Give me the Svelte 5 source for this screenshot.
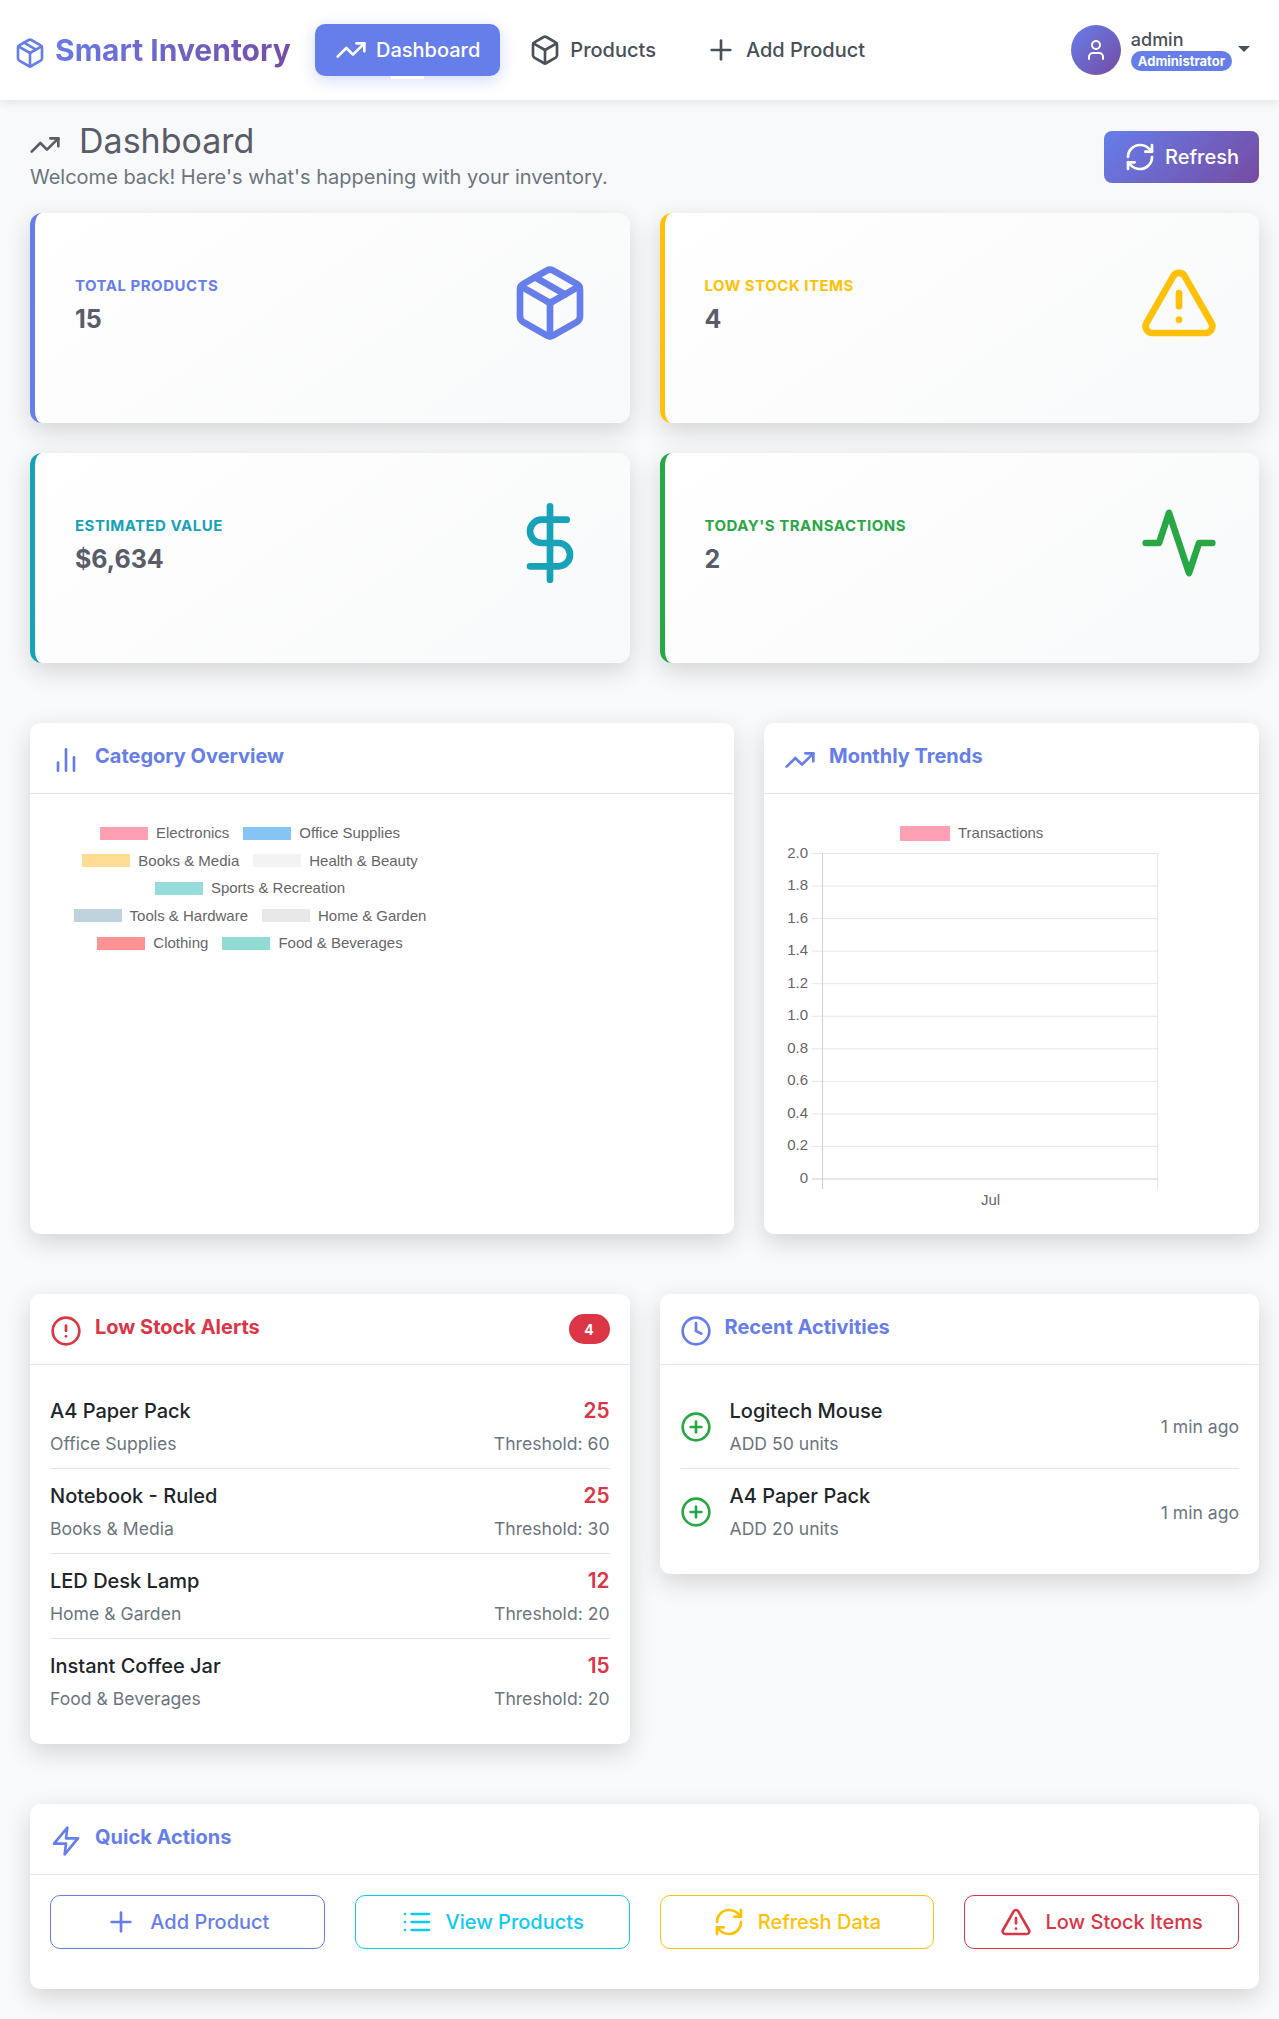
<script>
	const icons = {
		package: ['M11 21.73a2 2 0 0 0 2 0l7-4A2 2 0 0 0 21 16V8a2 2 0 0 0-1-1.73l-7-4a2 2 0 0 0-2 0l-7 4A2 2 0 0 0 3 8v8a2 2 0 0 0 1 1.73z', 'M12 22V12', 'm3.3 7 8.7 5 8.7-5', 'm7.5 4.27 9 5.15'],
		box: ['M21 8a2 2 0 0 0-1-1.73l-7-4a2 2 0 0 0-2 0l-7 4A2 2 0 0 0 3 8v8a2 2 0 0 0 1 1.73l7 4a2 2 0 0 0 2 0l7-4A2 2 0 0 0 21 16Z', 'm3.3 7 8.7 5 8.7-5', 'M12 22V12'],
		trending: ['M22 7l-8.5 8.5-5-5L2 17', 'M16 7h6v6'],
		plus: ['M5 12h14', 'M12 5v14'],
		user: ['M19 21v-2a4 4 0 0 0-4-4H9a4 4 0 0 0-4 4v2', 'M16 7a4 4 0 1 1-8 0 4 4 0 0 1 8 0z'],
		refresh: ['M3 12a9 9 0 0 1 9-9 9.75 9.75 0 0 1 6.74 2.74L21 8', 'M21 3v5h-5', 'M21 12a9 9 0 0 1-9 9 9.75 9.75 0 0 1-6.74-2.74L3 16', 'M8 16H3v5'],
		warning: ['m21.73 18-8-14a2 2 0 0 0-3.48 0l-8 14A2 2 0 0 0 4 21h16a2 2 0 0 0 1.73-3', 'M12 9v4', 'M12 17h.01'],
		dollar: ['M12 1v22', 'M17 5H9.5a3.5 3.5 0 0 0 0 7h5a3.5 3.5 0 0 1 0 7H6'],
		activity: ['M22 12h-4l-3 9L9 3l-3 9H2'],
		bars: ['M18 20V10', 'M12 20V4', 'M6 20v-6'],
		alert: ['M22 12a10 10 0 1 1-20 0 10 10 0 0 1 20 0z', 'M12 8v4', 'M12 16h.01'],
		clock: ['M22 12a10 10 0 1 1-20 0 10 10 0 0 1 20 0z', 'M12 6v6l4 2'],
		pluscircle: ['M22 12a10 10 0 1 1-20 0 10 10 0 0 1 20 0z', 'M8 12h8', 'M12 8v8'],
		zap: ['M13 2 3 14h9l-1 8 10-12h-9l1-8z'],
		list: ['M8 6h13', 'M8 12h13', 'M8 18h13', 'M3 6h.01', 'M3 12h.01', 'M3 18h.01']
	};

	const stats = [
		{ label: 'Total Products', value: '15', icon: 'package', color: '#667eea' },
		{ label: 'Low Stock Items', value: '4', icon: 'warning', color: '#ffc107' },
		{ label: 'Estimated Value', value: '$6,634', icon: 'dollar', color: '#17a2b8' },
		{ label: "Today's Transactions", value: '2', icon: 'activity', color: '#28a745' }
	];

	const legend = [
		[['Electronics', '#ff9fb3'], ['Office Supplies', '#85c4f3']],
		[['Books & Media', '#ffdc93'], ['Health & Beauty', '#f2f3f5']],
		[['Sports & Recreation', '#96dcda']],
		[['Tools & Hardware', '#bfd3df'], ['Home & Garden', '#e8e8e8']],
		[['Clothing', '#ff9393'], ['Food & Beverages', '#92dad4']]
	];

	const ticks = ['2.0', '1.8', '1.6', '1.4', '1.2', '1.0', '0.8', '0.6', '0.4', '0.2', '0'];

	const lowStock = [
		{ name: 'A4 Paper Pack', cat: 'Office Supplies', qty: 25, min: 60 },
		{ name: 'Notebook - Ruled', cat: 'Books & Media', qty: 25, min: 30 },
		{ name: 'LED Desk Lamp', cat: 'Home & Garden', qty: 12, min: 20 },
		{ name: 'Instant Coffee Jar', cat: 'Food & Beverages', qty: 15, min: 20 }
	];

	const activities = [
		{ name: 'Logitech Mouse', note: 'ADD 50 units' },
		{ name: 'A4 Paper Pack', note: 'ADD 20 units' }
	];

	const actions = [
		{ label: 'Add Product', icon: 'plus', color: '#667eea' },
		{ label: 'View Products', icon: 'list', color: '#0dcaf0' },
		{ label: 'Refresh Data', icon: 'refresh', color: '#ffc107' },
		{ label: 'Low Stock Items', icon: 'warning', color: '#dc3545' }
	];
</script>

{#snippet icon(name, size = 32)}
	<svg class="icon" width={size} height={size} viewBox="0 0 24 24" fill="none" stroke="currentColor" stroke-width="2" stroke-linecap="round" stroke-linejoin="round">
		{#each icons[name] as d}
			<path {d} />
		{/each}
	</svg>
{/snippet}

<nav class="navbar">
	<div class="brand">
		<span class="brand-icon">{@render icon('package')}</span>
		<span class="brand-text">Smart Inventory</span>
	</div>
	<div class="nav-links">
		<div class="nav-link active">{@render icon('trending')}<span>Dashboard</span></div>
		<div class="nav-link">{@render icon('box')}<span>Products</span></div>
		<div class="nav-link">{@render icon('plus')}<span>Add Product</span></div>
	</div>
	<div class="user">
		<div class="avatar">{@render icon('user', 24)}</div>
		<div class="user-info">
			<div class="user-name">admin</div>
			<div class="role">Administrator</div>
		</div>
		<div class="caret"></div>
	</div>
</nav>

<main>
	<div class="page-head">
		<div>
			<h1>{@render icon('trending')}<span>Dashboard</span></h1>
			<p>Welcome back! Here's what's happening with your inventory.</p>
		</div>
		<div class="refresh">{@render icon('refresh')}<span>Refresh</span></div>
	</div>

	<div class="stats">
		{#each stats as s}
			<div class="stat" style="border-left-color: {s.color}; color: {s.color}">
				<div class="stat-text">
					<div class="stat-label">{s.label}</div>
					<div class="stat-value">{s.value}</div>
				</div>
				{@render icon(s.icon, 80)}
			</div>
		{/each}
	</div>

	<div class="charts">
		<section class="card">
			<header>{@render icon('bars')}<h2>Category Overview</h2></header>
			<div class="chart-body">
				<div class="legend">
					{#each legend as row}
						<div class="legend-row">
							{#each row as [label, color]}
								<span class="legend-item"><i style="background: {color}"></i>{label}</span>
							{/each}
						</div>
					{/each}
				</div>
			</div>
		</section>
		<section class="card">
			<header>{@render icon('trending')}<h2>Monthly Trends</h2></header>
			<div class="chart-body">
				<svg class="trend" width="455" height="400" viewBox="0 0 455 400">
					<rect x="116" y="12" width="50" height="15" fill="#ffa0b4" />
					<text x="174" y="24" class="chart-text">Transactions</text>
					{#each ticks as t, i}
						<line x1="28" x2="374" y1={39.5 + i * 32.55} y2={39.5 + i * 32.55} stroke={i === 10 ? '#cfcfcf' : '#e6e6e6'} />
						<text x="24" y={43.5 + i * 32.55} text-anchor="end" class="chart-text">{t}</text>
					{/each}
					<line x1="38.5" x2="38.5" y1="39" y2="375" stroke="#cfcfcf" />
					<line x1="373.5" x2="373.5" y1="39" y2="375" stroke="#e6e6e6" />
					<text x="206.5" y="391" text-anchor="middle" class="chart-text">Jul</text>
				</svg>
			</div>
		</section>
	</div>

	<div class="lists">
		<section class="card">
			<header class="danger">
				{@render icon('alert')}<h2>Low Stock Alerts</h2>
				<span class="badge">4</span>
			</header>
			<div class="list">
				{#each lowStock as item}
					<div class="row">
						<div>
							<div class="name">{item.name}</div>
							<div class="sub">{item.cat}</div>
						</div>
						<div class="right">
							<div class="qty">{item.qty}</div>
							<div class="sub">Threshold: {item.min}</div>
						</div>
					</div>
				{/each}
			</div>
		</section>
		<section class="card">
			<header>{@render icon('clock')}<h2>Recent Activities</h2></header>
			<div class="list">
				{#each activities as a}
					<div class="row">
						<span class="added">{@render icon('pluscircle')}</span>
						<div class="grow">
							<div class="name">{a.name}</div>
							<div class="sub">{a.note}</div>
						</div>
						<div class="time">1 min ago</div>
					</div>
				{/each}
			</div>
		</section>
	</div>

	<section class="card quick">
		<header>{@render icon('zap')}<h2>Quick Actions</h2></header>
		<div class="actions">
			{#each actions as a}
				<div class="action" style="color: {a.color}; border-color: {a.color}">
					{@render icon(a.icon)}<span>{a.label}</span>
				</div>
			{/each}
		</div>
	</section>
</main>

<style>
	:global(body) {
		background: #f8f9fa;
		font-family: Inter, 'Liberation Sans', sans-serif;
		color: #212529;
	}
	.icon {
		display: block;
		flex: none;
	}

	.navbar {
		height: 100px;
		box-sizing: border-box;
		background: #fff;
		box-shadow: 0 2px 10px rgba(0, 0, 0, 0.1);
		display: flex;
		align-items: center;
		padding: 0 29px 0 14px;
	}
	.brand {
		display: flex;
		align-items: center;
		width: 301px;
		flex: none;
	}
	.brand-icon {
		color: #667eea;
		margin: 6px 9px 0 0;
	}
	.brand-text {
		font-size: 30px;
		font-weight: 700;
		background: linear-gradient(135deg, #667eea, #764ba2);
		-webkit-background-clip: text;
		background-clip: text;
		color: transparent;
	}
	.nav-links {
		display: flex;
		gap: 9px;
		flex: 1;
	}
	.nav-link {
		position: relative;
		display: flex;
		align-items: center;
		gap: 9px;
		height: 52px;
		padding: 0 20px;
		border-radius: 10px;
		font-size: 20px;
		font-weight: 500;
		color: #495057;
	}
	.nav-link.active {
		background: #667eea;
		color: #fff;
		box-shadow: 0 4px 15px rgba(102, 126, 234, 0.3);
	}
	.nav-link.active::after {
		content: '';
		position: absolute;
		left: 76px;
		bottom: -3px;
		width: 33px;
		height: 3px;
		background: #fff;
	}
	.user {
		display: flex;
		align-items: center;
	}
	.avatar {
		width: 50px;
		height: 50px;
		border-radius: 50%;
		background: linear-gradient(135deg, #667eea, #764ba2);
		color: #fff;
		display: flex;
		align-items: center;
		justify-content: center;
		margin-right: 10px;
	}
	.user-name {
		font-size: 18px;
		font-weight: 500;
		line-height: 22px;
		color: #495057;
	}
	.role {
		background: #667eea;
		color: #fff;
		font-size: 13px;
		font-weight: 700;
		line-height: 20px;
		padding: 0 7px;
		border-radius: 10px;
	}
	.caret {
		margin: 0 0 2px 6px;
		border-top: 6px solid #495057;
		border-left: 6px solid transparent;
		border-right: 6px solid transparent;
	}

	main {
		padding: 0 20px 30px 30px;
	}
	.page-head {
		height: 113px;
		display: flex;
		justify-content: space-between;
		align-items: flex-start;
		padding-top: 20px;
		box-sizing: border-box;
	}
	h1 {
		margin: 0 0 1px -1px;
		display: flex;
		align-items: center;
		gap: 18px;
		font-size: 34px;
		font-weight: 400;
		line-height: 42px;
		color: #5a5c69;
	}
	h1 .icon {
		margin-top: 8px;
	}
	.page-head p {
		margin: 0;
		font-size: 20px;
		line-height: 28px;
		color: #6c757d;
	}
	.refresh {
		display: flex;
		align-items: center;
		gap: 9px;
		height: 52px;
		margin-top: 11px;
		padding: 0 20px;
		border-radius: 8px;
		background: linear-gradient(135deg, #667eea, #764ba2);
		color: #fff;
		font-size: 20px;
		font-weight: 500;
	}

	.stats {
		display: grid;
		grid-template-columns: 1fr 1fr;
		gap: 30px;
	}
	.stat {
		height: 210px;
		box-sizing: border-box;
		padding: 50px 40px 0;
		border-left: 5px solid;
		border-radius: 12px;
		background: linear-gradient(145deg, #fff, #f8f9fa);
		box-shadow: 0 8px 25px rgba(0, 0, 0, 0.15);
		display: flex;
		justify-content: space-between;
		align-items: flex-start;
	}
	.stat-text {
		height: 80px;
		padding-top: 7px;
		box-sizing: border-box;
		display: flex;
		flex-direction: column;
		justify-content: center;
	}
	.stat-label {
		font-size: 15px;
		font-weight: 700;
		letter-spacing: 0.5px;
		text-transform: uppercase;
		line-height: 20px;
	}
	.stat-value {
		font-size: 25px;
		font-weight: 700;
		line-height: 38px;
		margin-top: 4px;
		color: #5a5c69;
	}

	.card {
		background: #fff;
		border-radius: 10px;
		box-shadow: 0 8px 25px rgba(0, 0, 0, 0.15);
	}
	.card header {
		height: 71px;
		box-sizing: border-box;
		padding: 0 20px;
		border-bottom: 1px solid #e3e6f0;
		display: flex;
		align-items: center;
		gap: 13px;
		color: #667eea;
	}
	.card header .icon {
		margin-top: 3px;
	}
	.card header.danger {
		color: #dc3545;
	}
	h2 {
		margin: 0 0 5px;
		font-size: 20px;
		font-weight: 700;
	}
	.badge {
		margin-left: auto;
		width: 41px;
		height: 30px;
		border-radius: 15px;
		background: #dc3545;
		color: #fff;
		font-size: 14px;
		font-weight: 700;
		display: flex;
		align-items: center;
		justify-content: center;
	}

	.charts {
		display: grid;
		grid-template-columns: 704fr 495fr;
		gap: 30px;
		margin-top: 60px;
	}
	.chart-body {
		height: 440px;
		box-sizing: border-box;
		padding: 20px;
	}
	.legend {
		width: 400px;
		margin-top: 10px;
		display: flex;
		flex-direction: column;
		gap: 9.5px;
		font: 15px/18px 'Liberation Sans', Arial, sans-serif;
		color: #666;
	}
	.legend-row {
		display: flex;
		justify-content: center;
		gap: 14px;
	}
	.legend-item {
		display: flex;
		align-items: center;
		gap: 8px;
	}
	.legend-item i {
		width: 48px;
		height: 13px;
	}
	.trend {
		display: block;
	}
	.chart-text {
		font: 15px 'Liberation Sans', Arial, sans-serif;
		fill: #666;
	}

	.lists {
		display: grid;
		grid-template-columns: 1fr 1fr;
		gap: 30px;
		margin-top: 60px;
		align-items: start;
	}
	.list {
		padding: 20px;
	}
	.row {
		height: 84px;
		box-sizing: border-box;
		display: flex;
		align-items: center;
		justify-content: space-between;
		border-bottom: 1px solid #e3e6f0;
		margin-bottom: 1px;
	}
	.row:last-child {
		border-bottom: 0;
		margin-bottom: 0;
	}
	.name {
		font-size: 20px;
		font-weight: 500;
		line-height: 30px;
		margin-top: -1px;
		color: #212529;
	}
	.sub {
		font-size: 17.6px;
		line-height: 26px;
		margin-top: 5px;
		color: #6c757d;
	}
	.right {
		text-align: right;
	}
	.qty {
		font-size: 20.8px;
		font-weight: 600;
		line-height: 30px;
		margin-top: -1px;
		color: #dc3545;
	}
	.added {
		color: #28a745;
		margin-right: 18px;
	}
	.grow {
		flex: 1;
	}
	.time {
		font-size: 17.6px;
		color: #6c757d;
	}

	.quick {
		margin-top: 60px;
	}
	.actions {
		display: grid;
		grid-template-columns: repeat(4, 1fr);
		gap: 30px;
		padding: 20px 20px 40px;
	}
	.action {
		height: 54px;
		box-sizing: border-box;
		border: 1px solid;
		border-radius: 10px;
		display: flex;
		align-items: center;
		justify-content: center;
		gap: 13px;
		font-size: 20px;
		font-weight: 500;
	}
</style>
